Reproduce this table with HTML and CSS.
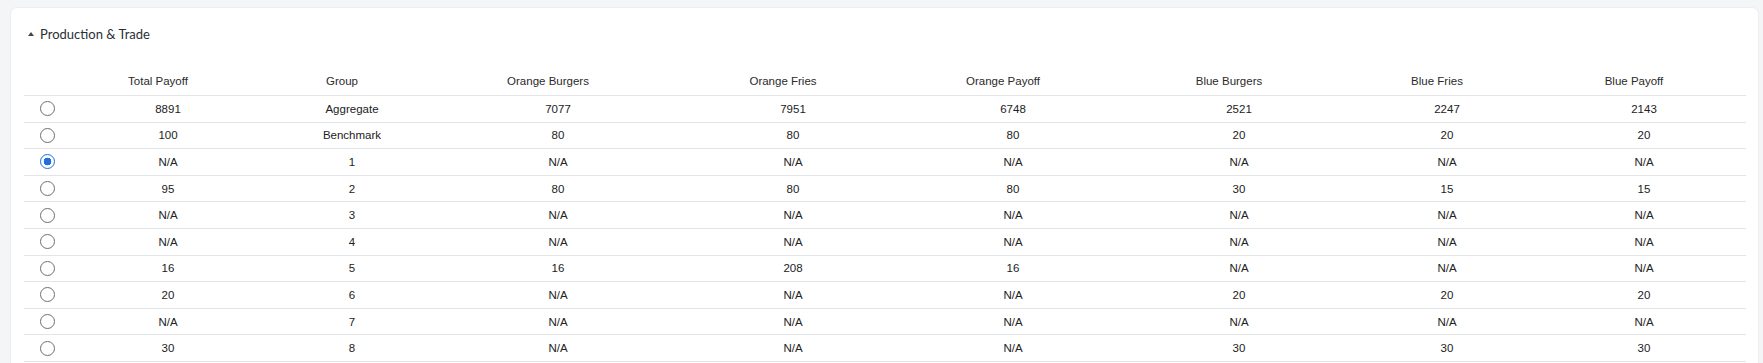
FILE: index.html
```html
<!DOCTYPE html>
<html lang="en">

<head>
    <meta charset="UTF-8">
    <meta name="viewport" content="width=device-width, initial-scale=1.0">
    <title>Production &amp; Trade</title>
    <link rel="stylesheet" href="styles.css">
</head>

<body>
    <div class="card">
        <div class="title">
            <span class="caret"></span>
            <span>Production &amp; Trade</span>
        </div>
        <table class="grid">
            <colgroup>
                <col class="c-pick">
                <col class="c-total">
                <col class="c-group">
                <col class="c-ob">
                <col class="c-of">
                <col class="c-op">
                <col class="c-bb">
                <col class="c-bf">
                <col class="c-bp">
            </colgroup>
            <thead>
                <tr>
                    <th></th>
                    <th>Total Payoff</th>
                    <th>Group</th>
                    <th>Orange Burgers</th>
                    <th>Orange Fries</th>
                    <th>Orange Payoff</th>
                    <th>Blue Burgers</th>
                    <th>Blue Fries</th>
                    <th>Blue Payoff</th>
                </tr>
            </thead>
            <tbody>
                <tr>
                    <td><input type="radio" name="grp" class="radio"></td>
                    <td>8891</td><td>Aggregate</td><td>7077</td><td>7951</td><td>6748</td><td>2521</td><td>2247</td><td>2143</td>
                </tr>
                <tr>
                    <td><input type="radio" name="grp" class="radio"></td>
                    <td>100</td><td>Benchmark</td><td>80</td><td>80</td><td>80</td><td>20</td><td>20</td><td>20</td>
                </tr>
                <tr>
                    <td><input type="radio" name="grp" class="radio" checked></td>
                    <td>N/A</td><td>1</td><td>N/A</td><td>N/A</td><td>N/A</td><td>N/A</td><td>N/A</td><td>N/A</td>
                </tr>
                <tr>
                    <td><input type="radio" name="grp" class="radio"></td>
                    <td>95</td><td>2</td><td>80</td><td>80</td><td>80</td><td>30</td><td>15</td><td>15</td>
                </tr>
                <tr>
                    <td><input type="radio" name="grp" class="radio"></td>
                    <td>N/A</td><td>3</td><td>N/A</td><td>N/A</td><td>N/A</td><td>N/A</td><td>N/A</td><td>N/A</td>
                </tr>
                <tr>
                    <td><input type="radio" name="grp" class="radio"></td>
                    <td>N/A</td><td>4</td><td>N/A</td><td>N/A</td><td>N/A</td><td>N/A</td><td>N/A</td><td>N/A</td>
                </tr>
                <tr>
                    <td><input type="radio" name="grp" class="radio"></td>
                    <td>16</td><td>5</td><td>16</td><td>208</td><td>16</td><td>N/A</td><td>N/A</td><td>N/A</td>
                </tr>
                <tr>
                    <td><input type="radio" name="grp" class="radio"></td>
                    <td>20</td><td>6</td><td>N/A</td><td>N/A</td><td>N/A</td><td>20</td><td>20</td><td>20</td>
                </tr>
                <tr>
                    <td><input type="radio" name="grp" class="radio"></td>
                    <td>N/A</td><td>7</td><td>N/A</td><td>N/A</td><td>N/A</td><td>N/A</td><td>N/A</td><td>N/A</td>
                </tr>
                <tr>
                    <td><input type="radio" name="grp" class="radio"></td>
                    <td>30</td><td>8</td><td>N/A</td><td>N/A</td><td>N/A</td><td>30</td><td>30</td><td>30</td>
                </tr>
            </tbody>
        </table>
    </div>
</body>

</html>
```

FILE: styles.css
```css
body {
    margin: 0;
    padding: 8px 5px 0 11px;
    background: #f3f5f7;
    overflow: hidden;
}

.card {
    background: #ffffff;
    border-radius: 6px;
    padding: 17px 12px 40px 13px;
    box-shadow: 0 0 0 1px #eceff2;
}

.title {
    display: flex;
    align-items: center;
    gap: 6px;
    padding-left: 4px;
    height: 18px;
    font-family: Lato, "Liberation Sans", sans-serif;
    font-size: 13px;
    color: #2b2f33;
}

.caret {
    width: 0;
    height: 0;
    border-left: 3.5px solid transparent;
    border-right: 3.5px solid transparent;
    border-bottom: 4px solid #3c4650;
    margin-top: -1px;
}

.grid {
    width: 100%;
    margin-top: 23px;
    table-layout: fixed;
    border-collapse: separate;
    border-spacing: 0;
    font-family: "Liberation Sans", Arial, sans-serif;
    font-size: 11.5px;
    color: #222222;
}

.c-pick { width: 46px; }
.c-total { width: 196px; }
.c-group { width: 172px; }
.c-ob { width: 240px; }
.c-of { width: 230px; }
.c-op { width: 210px; }
.c-bb { width: 242px; }
.c-bf { width: 174px; }
.c-bp { width: 212px; }

.grid th,
.grid td {
    box-sizing: border-box;
    text-align: center;
    vertical-align: middle;
    border-bottom: 1px solid #e2e4e6;
    white-space: nowrap;
}

.grid th {
    height: 30px;
    padding: 0 20px 0 0;
    font-weight: 400;
    color: #2a2a2a;
}

.grid th:first-child {
    padding: 0;
}

.grid td {
    height: 26.6px;
    padding: 0;
}

.grid th:last-child,
.grid td:last-child {
    padding-left: 8px;
}

.radio {
    appearance: none;
    -webkit-appearance: none;
    display: block;
    margin: 0 auto;
    width: 15px;
    height: 15px;
    border: 1px solid #6f6f6f;
    border-radius: 50%;
    background: #ffffff;
}

.radio:checked {
    border: 1.5px solid #1e6fe6;
    background: radial-gradient(circle, #1e6fe6 0 3.6px, #ffffff 4.1px);
}
```
